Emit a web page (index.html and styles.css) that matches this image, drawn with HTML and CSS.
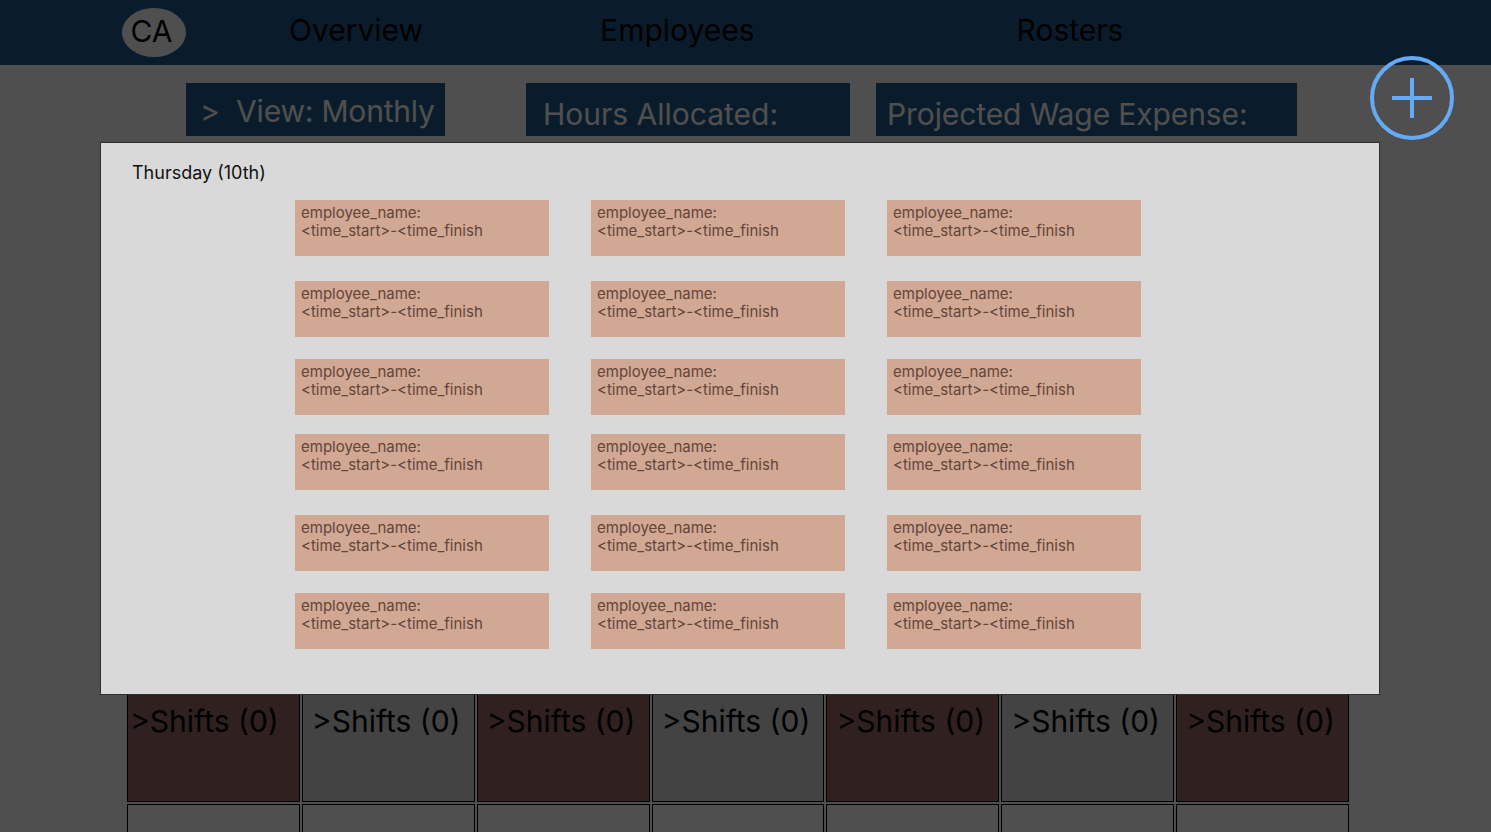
FILE: index.html
```html
<!DOCTYPE html>
<html lang="en">
<head>
<meta charset="utf-8">
<title>Rosters</title>
<link rel="stylesheet" href="styles.css">
</head>
<body>
<header class="nav">
  <div class="avatar">CA</div>
  <a class="nav-link nav-overview">Overview</a>
  <a class="nav-link nav-employees">Employees</a>
  <a class="nav-link nav-rosters">Rosters</a>
</header>

<section class="toolbar">
  <div class="tool tool-view">&gt;&nbsp; View: Monthly</div>
  <div class="tool tool-hours">Hours Allocated:</div>
  <div class="tool tool-wage">Projected Wage Expense:</div>
</section>

<main class="calendar">
  <div class="cell"></div><div class="cell"></div><div class="cell"></div><div class="cell"></div><div class="cell"></div><div class="cell"></div><div class="cell"></div>
  <div class="cell"></div><div class="cell"></div><div class="cell"></div><div class="cell"></div><div class="cell"></div><div class="cell"></div><div class="cell"></div>
  <div class="cell"></div><div class="cell"></div><div class="cell"></div><div class="cell"></div><div class="cell"></div><div class="cell"></div><div class="cell"></div>
  <div class="cell"></div><div class="cell"></div><div class="cell"></div><div class="cell"></div><div class="cell"></div><div class="cell"></div><div class="cell"></div>
  <div class="cell"></div><div class="cell"></div><div class="cell"></div><div class="cell"></div><div class="cell"></div><div class="cell"></div><div class="cell"></div>
  <div class="cell shift odd first">&gt;Shifts (0)</div>
  <div class="cell shift even">&gt;Shifts (0)</div>
  <div class="cell shift odd">&gt;Shifts (0)</div>
  <div class="cell shift even">&gt;Shifts (0)</div>
  <div class="cell shift odd">&gt;Shifts (0)</div>
  <div class="cell shift even">&gt;Shifts (0)</div>
  <div class="cell shift odd">&gt;Shifts (0)</div>
  <div class="cell"></div><div class="cell"></div><div class="cell"></div><div class="cell"></div><div class="cell"></div><div class="cell"></div><div class="cell"></div>
</main>

<div class="overlay"></div>

<button class="fab" aria-label="Add">
  <svg width="86" height="86" viewBox="0 0 86 86">
    <circle cx="43" cy="43" r="40" fill="none" stroke="#64aaf5" stroke-width="4"/>
    <line x1="23" y1="43" x2="63" y2="43" stroke="#64aaf5" stroke-width="4"/>
    <line x1="43" y1="23" x2="43" y2="63" stroke="#64aaf5" stroke-width="4"/>
  </svg>
</button>

<div class="modal">
  <h2 class="modal-title">Thursday (10th)</h2>
  <div class="shift-list">
    <div class="shift-row">
      <div class="shift-card">employee_name:<br>&lt;time_start&gt;-&lt;time_finish</div>
      <div class="shift-card">employee_name:<br>&lt;time_start&gt;-&lt;time_finish</div>
      <div class="shift-card">employee_name:<br>&lt;time_start&gt;-&lt;time_finish</div>
    </div>
    <div class="shift-row gap-25">
      <div class="shift-card">employee_name:<br>&lt;time_start&gt;-&lt;time_finish</div>
      <div class="shift-card">employee_name:<br>&lt;time_start&gt;-&lt;time_finish</div>
      <div class="shift-card">employee_name:<br>&lt;time_start&gt;-&lt;time_finish</div>
    </div>
    <div class="shift-row gap-22">
      <div class="shift-card">employee_name:<br>&lt;time_start&gt;-&lt;time_finish</div>
      <div class="shift-card">employee_name:<br>&lt;time_start&gt;-&lt;time_finish</div>
      <div class="shift-card">employee_name:<br>&lt;time_start&gt;-&lt;time_finish</div>
    </div>
    <div class="shift-row gap-19">
      <div class="shift-card">employee_name:<br>&lt;time_start&gt;-&lt;time_finish</div>
      <div class="shift-card">employee_name:<br>&lt;time_start&gt;-&lt;time_finish</div>
      <div class="shift-card">employee_name:<br>&lt;time_start&gt;-&lt;time_finish</div>
    </div>
    <div class="shift-row gap-25">
      <div class="shift-card">employee_name:<br>&lt;time_start&gt;-&lt;time_finish</div>
      <div class="shift-card">employee_name:<br>&lt;time_start&gt;-&lt;time_finish</div>
      <div class="shift-card">employee_name:<br>&lt;time_start&gt;-&lt;time_finish</div>
    </div>
    <div class="shift-row gap-22">
      <div class="shift-card">employee_name:<br>&lt;time_start&gt;-&lt;time_finish</div>
      <div class="shift-card">employee_name:<br>&lt;time_start&gt;-&lt;time_finish</div>
      <div class="shift-card">employee_name:<br>&lt;time_start&gt;-&lt;time_finish</div>
    </div>
  </div>
</div>
</body>
</html>
```
FILE: styles.css
```css
html, body {
  margin: 0;
  padding: 0;
  height: 100%;
  overflow: hidden;
}

body {
  background: #ffffff;
  font-family: Inter, "Noto Sans", sans-serif;
  color: #000;
}

/* Top navigation */
.nav {
  height: 65px;
  background: #205a8e;
  display: flex;
  align-items: center;
  padding-left: 122px;
  padding-bottom: 5px;
  box-sizing: border-box;
}

.avatar {
  width: 64px;
  height: 49px;
  border-radius: 50%;
  background: #ffffff;
  display: flex;
  align-items: center;
  justify-content: center;
  font-size: 30px;
  margin-top: 4px;
  padding-right: 5px;
  padding-bottom: 2px;
  box-sizing: border-box;
}

.nav-link {
  font-size: 30px;
  color: #000;
}

.nav-overview { margin-left: 103px; }
.nav-employees { margin-left: 177px; }
.nav-rosters { margin-left: 262px; }

/* Toolbar */
.toolbar {
  display: flex;
  margin-top: 18px;
  padding-left: 186px;
}

.tool {
  height: 53px;
  background: #205a8e;
  color: #ffffff;
  font-size: 30px;
  box-sizing: border-box;
  white-space: nowrap;
}

.tool-view {
  width: 259px;
  padding: 10px 0 0 14px;
  letter-spacing: -0.2px;
}

.tool-hours {
  width: 324px;
  margin-left: 81px;
  padding: 13px 0 0 17px;
}

.tool-wage {
  width: 421px;
  margin-left: 26px;
  padding: 13px 0 0 11px;
  letter-spacing: -0.1px;
}

/* Calendar grid (behind the modal) */
.calendar {
  display: grid;
  grid-template-columns: repeat(7, 1fr);
  grid-auto-rows: 108px;
  gap: 2px;
  width: 1222px;
  margin: 8px 0 0 127px;
}

.cell {
  border: 1px solid #000;
  background: #ffffff;
}

.shift {
  font-size: 30px;
  padding: 6px 0 0 9px;
  line-height: 40px;
  color: #000;
  white-space: nowrap;
}

.shift.first { padding-left: 2px; }
.shift.odd { background: #9e6767; }
.shift.even { background: #d8d8d8; }

/* Dim overlay */
.overlay {
  position: fixed;
  inset: 0;
  background: rgba(0, 0, 0, 0.69);
}

/* Floating add button */
.fab {
  position: fixed;
  left: 1369px;
  top: 55px;
  width: 86px;
  height: 86px;
  padding: 0;
  border: 0;
  background: transparent;
}

.fab svg { display: block; }

/* Modal */
.modal {
  position: fixed;
  left: 100px;
  top: 142px;
  width: 1280px;
  height: 553px;
  box-sizing: border-box;
  background: #d9d9d9;
  border: 1px solid #2f2f2f;
  padding: 19px 0 0 31px;
}

.modal-title {
  margin: 0;
  font-size: 18px;
  font-weight: 400;
  line-height: 22px;
  color: #111;
}

.shift-list {
  margin: 16px 0 0 163px;
}

.shift-row {
  display: flex;
  gap: 42px;
}

.gap-25 { margin-top: 25px; }
.gap-22 { margin-top: 22px; }
.gap-19 { margin-top: 19px; }

.shift-card {
  width: 254px;
  height: 56px;
  box-sizing: border-box;
  background: #d0a894;
  color: #634539;
  font-size: 15px;
  line-height: 18px;
  padding: 4px 0 0 6px;
  white-space: nowrap;
}
```
